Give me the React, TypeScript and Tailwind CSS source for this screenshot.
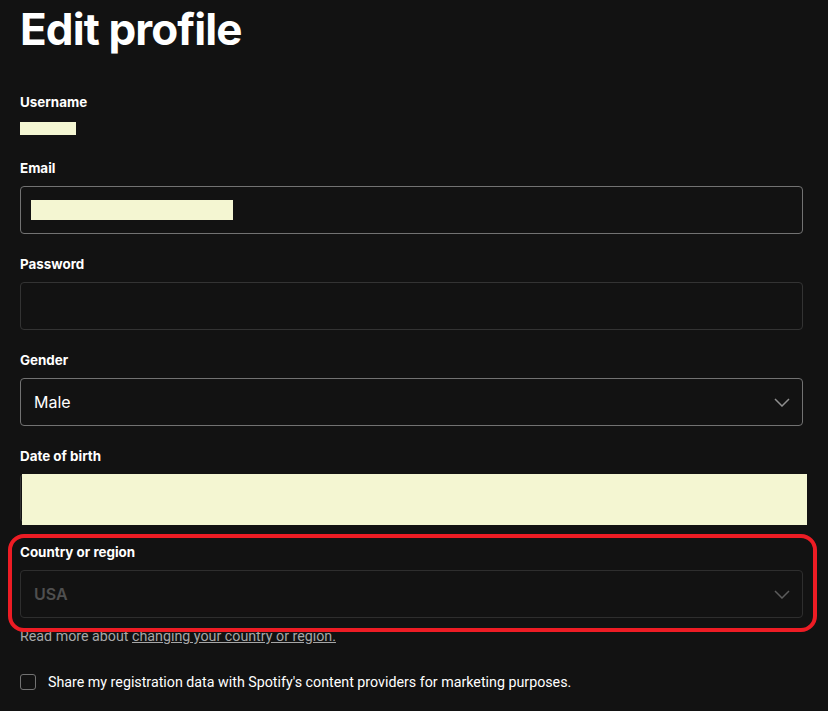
const LABEL = "block text-[13.4px] leading-[16px] font-bold text-white"
const REDACT = "bg-[#f4f6d2]"

function Chevron({ color }: { color: string }) {
  return (
    <svg width="16" height="9" viewBox="0 0 16 9" fill="none" className="shrink-0">
      <path d="M1 1l7 7 7-7" stroke={color} strokeWidth="1.5" />
    </svg>
  )
}

function Field({ label, children }: { label: string; children: React.ReactNode }) {
  return (
    <div className="mb-[22px]">
      <label className={`${LABEL} mb-[10px]`}>{label}</label>
      {children}
    </div>
  )
}

export default function App() {
  return (
    <div className="relative min-h-[711px] bg-[#121212] pl-5 pr-[25px] pt-[7px] font-['Inter',sans-serif] text-white">
      <h1 className="text-[44px] leading-[44px] font-bold tracking-[-0.9px] mb-[43px]">Edit profile</h1>

      <div className="mb-[25px]">
        <label className={LABEL}>Username</label>
        <div className={`${REDACT} mt-3 h-[13px] w-[56px]`} />
      </div>

      <Field label="Email">
        <div className="h-12 rounded border border-[#727272] flex items-center pl-[10px]">
          <div className={`${REDACT} h-[20px] w-[202px]`} />
        </div>
      </Field>

      <Field label="Password">
        <div className="h-12 rounded border border-[#333333]" />
      </Field>

      <Field label="Gender">
        <div className="h-12 rounded border border-[#727272] flex items-center justify-between pl-[13px] pr-[12px]">
          <span className="text-[16px]">Male</span>
          <Chevron color="#8f8f8f" />
        </div>
      </Field>

      <Field label="Date of birth">
        <div className="relative h-12 rounded border border-[#333333]">
          <div className={`absolute left-[1px] top-[-1px] h-[51px] w-[785px] ${REDACT}`} />
        </div>
      </Field>

      <div>
        <label className={`${LABEL} mb-[10px]`}>Country or region</label>
        <div className="h-12 rounded border border-[#2e2e2e] flex items-center justify-between pl-[13px] pr-[12px]">
          <span className="text-[16px] font-semibold text-[#4f4f4f]">USA</span>
          <Chevron color="#5c5c5c" />
        </div>
        <p className="mt-2 font-['Roboto',sans-serif] text-[14.25px] leading-5 text-[#a7a7a7]">
          Read more about <a className="underline">changing your country or region.</a>
        </p>
      </div>

      <label className="mt-[26px] flex items-center gap-3 font-['Roboto',sans-serif] text-[14.25px] leading-5">
        <span className="h-4 w-4 rounded-[3px] border border-[#727272] shrink-0" />
        <span>Share my registration data with Spotify's content providers for marketing purposes.</span>
      </label>

      <div className="pointer-events-none absolute left-[8px] top-[534px] h-[98px] w-[809px] rounded-[16px] border-4 border-[#ed1c24]" />
    </div>
  )
}
